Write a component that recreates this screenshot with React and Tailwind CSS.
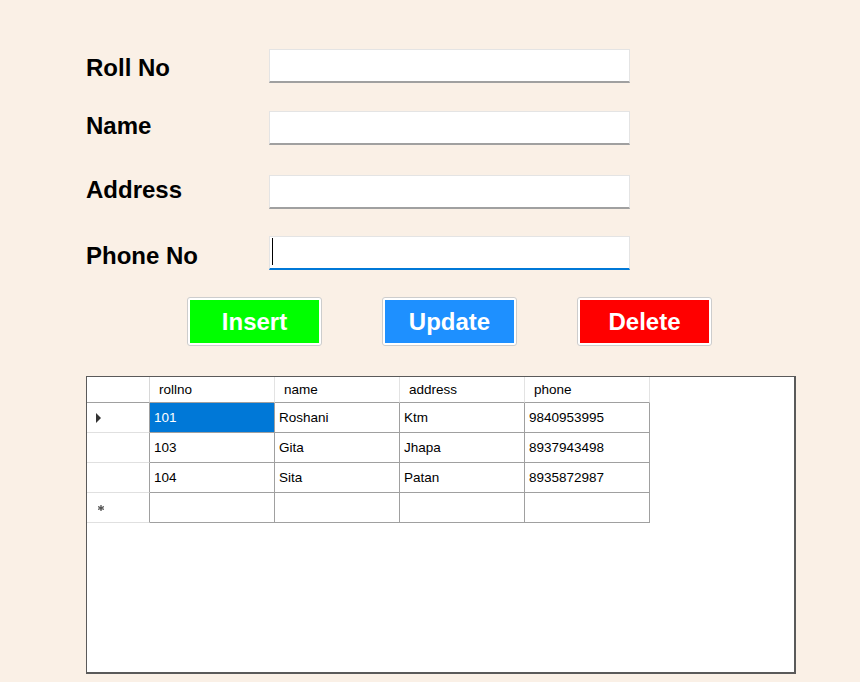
import React from "react";

const fields = [
	{ label: "Roll No", labelTop: "mt-[7px]", rowTop: "mt-0" },
	{ label: "Name", labelTop: "mt-[3px]", rowTop: "mt-[28px]" },
	{ label: "Address", labelTop: "mt-[3px]", rowTop: "mt-[30px]" },
	{ label: "Phone No", labelTop: "mt-[8px]", rowTop: "mt-[27px]", focused: true },
];

const rows = [
	{ rollno: "101", name: "Roshani", address: "Ktm", phone: "9840953995", current: true },
	{ rollno: "103", name: "Gita", address: "Jhapa", phone: "8937943498" },
	{ rollno: "104", name: "Sita", address: "Patan", phone: "8935872987" },
];

const columns = ["rollno", "name", "address", "phone"];

const ActionButton = ({ children, fill }) => (
	<button className="w-[135px] h-[49px] border border-[#cdcdcd] rounded-[3px] bg-white p-[2px] cursor-pointer">
		<span
			className={`flex items-center justify-center w-full h-full text-white text-[24px] font-bold ${fill}`}
		>
			{children}
		</span>
	</button>
);

const DataGrid = () => (
	<div className="w-[710px] h-[298px] bg-white border border-[#5a5a5a] border-r-2 border-b-2 text-[13.5px] text-black leading-none">
		{/* header */}
		<div className="flex h-[26px]">
			<div className="w-[63px] border-r border-b border-r-[#d8d8d8] border-b-[#a0a0a0]" />
			{columns.map((c) => (
				<div
					key={c}
					className="w-[125px] flex items-center pl-[9px] border-r border-b border-r-[#e3e3e3] border-b-[#a0a0a0]"
				>
					{c}
				</div>
			))}
		</div>

		{rows.map((r) => (
			<div key={r.rollno} className="flex h-[30px]">
				<div className="w-[63px] flex items-center pl-[9px] border-r border-b border-r-[#a0a0a0] border-b-[#e0e0e0]">
					{r.current && (
						<svg width="6" height="10" viewBox="0 0 6 10">
							<polygon points="0,0 5,5 0,10" fill="#333" />
						</svg>
					)}
				</div>
				{columns.map((c) => (
					<div
						key={c}
						className={`w-[125px] flex items-center pl-[4px] border-r border-b border-[#a0a0a0] ${
							r.current && c === "rollno" ? "bg-[#0078d7] text-white" : ""
						}`}
					>
						{r[c]}
					</div>
				))}
			</div>
		))}

		{/* new row */}
		<div className="flex h-[30px]">
			<div className="w-[63px] flex items-center pl-[11px] border-r border-b border-r-[#a0a0a0] border-b-[#e0e0e0]">
				<svg width="6" height="6" viewBox="0 0 6 6">
					<path d="M3 0V6M0 1.5L6 4.5M0 4.5L6 1.5" stroke="#555" strokeWidth="1.3" />
				</svg>
			</div>
			{columns.map((c) => (
				<div key={c} className="w-[125px] border-r border-b border-[#a0a0a0]" />
			))}
		</div>
	</div>
);

export default function App() {
	return (
		<div className="w-[860px] h-[682px] overflow-hidden bg-[#faf0e6] font-['Liberation_Sans',Arial,sans-serif]">
			<div className="pt-[49px] pl-[86px] flex flex-col">
				{fields.map((f) => (
					<div key={f.label} className={`flex items-start ${f.rowTop}`}>
						<label
							className={`w-[183px] text-[24px] leading-[24px] font-bold text-black ${f.labelTop}`}
						>
							{f.label}
						</label>
						<div
							className={`relative w-[361px] h-[34px] bg-white border border-[#e4e4e4] border-b-2 ${
								f.focused ? "border-b-[#0078d7]" : "border-b-[#a0a0a0]"
							}`}
						>
							{f.focused && (
								<div className="absolute left-[2px] top-[1px] w-px h-[27px] bg-black" />
							)}
						</div>
					</div>
				))}

				<div className="flex gap-[60px] pl-[101px] mt-[27px]">
					<ActionButton fill="bg-[#00ff00]">Insert</ActionButton>
					<ActionButton fill="bg-[#1e90ff]">Update</ActionButton>
					<ActionButton fill="bg-[#ff0000]">Delete</ActionButton>
				</div>

				<div className="mt-[30px]">
					<DataGrid />
				</div>
			</div>
		</div>
	);
}
